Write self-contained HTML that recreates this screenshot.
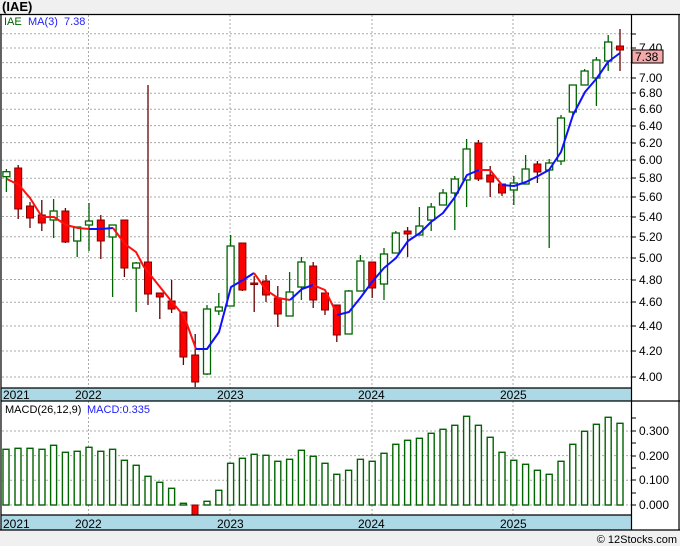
<!DOCTYPE html>
<html><head><meta charset="utf-8"><style>
html,body{margin:0;padding:0;background:#f0f0f0}
svg{display:block}
text{font-family:"Liberation Sans",sans-serif}
.g line{stroke:#006400;stroke-width:1.3}
.g rect{fill:#fff;stroke:#006400;stroke-width:1.3}
.r line{stroke:#6b0000;stroke-width:1.3}
.r rect{fill:#f00;stroke:#800000;stroke-width:1}
.grid line{stroke:#aaa;stroke-width:1;stroke-dasharray:2,2}
.m rect{fill:#fff;stroke:#006400;stroke-width:1.4}
.ax text{font-size:12px;fill:#000}
</style></head><body>
<svg width="680" height="546" viewBox="0 0 680 546">
<rect x="0" y="0" width="680" height="546" fill="#f0f0f0"/>
<text x="2" y="11" font-size="13" font-weight="bold" fill="#000">(IAE)</text>
<rect x="1" y="14" width="678" height="516" fill="#fff"/>
<!-- grids -->
<g class="grid">
<line x1="88.5" y1="15" x2="88.5" y2="388"/><line x1="230" y1="15" x2="230" y2="388"/><line x1="372" y1="15" x2="372" y2="388"/><line x1="513" y1="15" x2="513" y2="388"/>
<line x1="88.5" y1="401" x2="88.5" y2="515"/><line x1="230" y1="401" x2="230" y2="515"/><line x1="372" y1="401" x2="372" y2="515"/><line x1="513" y1="401" x2="513" y2="515"/>
<line x1="2" y1="377" x2="631" y2="377"/><line x1="2" y1="351" x2="631" y2="351"/><line x1="2" y1="326" x2="631" y2="326"/><line x1="2" y1="302.3" x2="631" y2="302.3"/><line x1="2" y1="279.5" x2="631" y2="279.5"/><line x1="2" y1="257.7" x2="631" y2="257.7"/><line x1="2" y1="236.7" x2="631" y2="236.7"/><line x1="2" y1="216.5" x2="631" y2="216.5"/><line x1="2" y1="197" x2="631" y2="197"/><line x1="2" y1="178.3" x2="631" y2="178.3"/><line x1="2" y1="160.2" x2="631" y2="160.2"/><line x1="2" y1="142.6" x2="631" y2="142.6"/><line x1="2" y1="125.6" x2="631" y2="125.6"/><line x1="2" y1="109.2" x2="631" y2="109.2"/><line x1="2" y1="93.2" x2="631" y2="93.2"/><line x1="2" y1="77.7" x2="631" y2="77.7"/><line x1="2" y1="62.6" x2="631" y2="62.6"/><line x1="2" y1="48" x2="631" y2="48"/><line x1="2" y1="33.7" x2="631" y2="33.7"/>
<line x1="2" y1="505" x2="631" y2="505"/><line x1="2" y1="480.3" x2="631" y2="480.3"/><line x1="2" y1="455.6" x2="631" y2="455.6"/><line x1="2" y1="431" x2="631" y2="431"/>
</g>
<!-- candles -->
<g class="g">
<line x1="6.4" y1="169" x2="6.4" y2="192"/><rect x="2.9" y="171.7" width="7" height="5"/>
<line x1="53.6" y1="199" x2="53.6" y2="238"/><rect x="50.1" y="211" width="7" height="9"/>
<line x1="77.2" y1="227" x2="77.2" y2="257"/><rect x="73.7" y="227" width="7" height="14"/>
<line x1="89" y1="203" x2="89" y2="251"/><rect x="85.5" y="221" width="7" height="4"/>
<line x1="112.6" y1="225" x2="112.6" y2="297"/><rect x="109.1" y="225" width="7" height="12"/>
<line x1="136.2" y1="262" x2="136.2" y2="312"/><rect x="132.7" y="263" width="7" height="5"/>
<line x1="207" y1="305" x2="207" y2="375"/><rect x="203.5" y="309" width="7" height="65"/>
<line x1="218.8" y1="293" x2="218.8" y2="315"/><rect x="215.3" y="307" width="7" height="4"/>
<line x1="230.6" y1="235" x2="230.6" y2="306"/><rect x="227.1" y="246" width="7" height="60"/>
<line x1="289.6" y1="272" x2="289.6" y2="316"/><rect x="286.1" y="292" width="7" height="24"/>
<line x1="301.4" y1="257" x2="301.4" y2="300"/><rect x="297.9" y="262" width="7" height="25"/>
<line x1="348.6" y1="290" x2="348.6" y2="334"/><rect x="345.1" y="291" width="7" height="43"/>
<line x1="360.4" y1="255" x2="360.4" y2="291"/><rect x="356.9" y="261" width="7" height="30"/>
<line x1="384" y1="248" x2="384" y2="300"/><rect x="380.5" y="254" width="7" height="30"/>
<line x1="395.8" y1="231" x2="395.8" y2="253"/><rect x="392.3" y="233" width="7" height="20"/>
<line x1="419.4" y1="207" x2="419.4" y2="235"/><rect x="415.9" y="226" width="7" height="9"/>
<line x1="431.2" y1="203" x2="431.2" y2="231"/><rect x="427.7" y="207" width="7" height="13"/>
<line x1="443" y1="189" x2="443" y2="205"/><rect x="439.5" y="193" width="7" height="12"/>
<line x1="454.8" y1="176" x2="454.8" y2="230"/><rect x="451.3" y="179" width="7" height="14"/>
<line x1="466.6" y1="139" x2="466.6" y2="207"/><rect x="463.1" y="149" width="7" height="31"/>
<line x1="513.8" y1="176" x2="513.8" y2="205"/><rect x="510.3" y="183" width="7" height="7"/>
<line x1="525.6" y1="155" x2="525.6" y2="184"/><rect x="522.1" y="169" width="7" height="15"/>
<line x1="549.2" y1="159" x2="549.2" y2="248"/><rect x="545.7" y="163" width="7" height="7"/>
<line x1="561" y1="115" x2="561" y2="165"/><rect x="557.5" y="118" width="7" height="43"/>
<line x1="572.8" y1="85" x2="572.8" y2="115"/><rect x="569.3" y="85" width="7" height="27"/>
<line x1="584.6" y1="69" x2="584.6" y2="85"/><rect x="581.1" y="71" width="7" height="14"/>
<line x1="596.4" y1="57" x2="596.4" y2="106"/><rect x="592.9" y="60" width="7" height="18"/>
<line x1="608.2" y1="35" x2="608.2" y2="71"/><rect x="604.7" y="42" width="7" height="19"/>
</g>
<g class="r">
<line x1="18.2" y1="165" x2="18.2" y2="219"/><rect x="14.7" y="168" width="7" height="41"/>
<line x1="30" y1="202" x2="30" y2="228"/><rect x="26.5" y="206" width="7" height="12"/>
<line x1="41.8" y1="200" x2="41.8" y2="231"/><rect x="38.3" y="215" width="7" height="8"/>
<line x1="65.4" y1="208" x2="65.4" y2="243"/><rect x="61.9" y="211" width="7" height="31"/>
<line x1="100.8" y1="215" x2="100.8" y2="259"/><rect x="97.3" y="220" width="7" height="21"/>
<line x1="124.4" y1="220" x2="124.4" y2="277"/><rect x="120.9" y="220" width="7" height="48"/>
<line x1="148" y1="85" x2="148" y2="305"/><rect x="144.5" y="262" width="7" height="32"/>
<line x1="159.8" y1="293" x2="159.8" y2="319"/><rect x="156.3" y="293" width="7" height="4"/>
<line x1="171.6" y1="280" x2="171.6" y2="313"/><rect x="168.1" y="301" width="7" height="8"/>
<line x1="183.4" y1="312" x2="183.4" y2="365"/><rect x="179.9" y="312" width="7" height="45"/>
<line x1="195.2" y1="334" x2="195.2" y2="387"/><rect x="191.7" y="355" width="7" height="27"/>
<line x1="242.4" y1="243" x2="242.4" y2="291"/><rect x="238.9" y="243" width="7" height="47"/>
<line x1="254.2" y1="276" x2="254.2" y2="312"/><rect x="250.7" y="283" width="7" height="1.5"/>
<line x1="266" y1="275" x2="266" y2="302"/><rect x="262.5" y="281" width="7" height="14"/>
<line x1="277.8" y1="286" x2="277.8" y2="327"/><rect x="274.3" y="298" width="7" height="16"/>
<line x1="313.2" y1="262" x2="313.2" y2="308"/><rect x="309.7" y="266" width="7" height="34"/>
<line x1="325" y1="293" x2="325" y2="315"/><rect x="321.5" y="293" width="7" height="17"/>
<line x1="336.8" y1="305" x2="336.8" y2="342"/><rect x="333.3" y="305" width="7" height="30"/>
<line x1="372.2" y1="262" x2="372.2" y2="298"/><rect x="368.7" y="262" width="7" height="26"/>
<line x1="407.6" y1="227" x2="407.6" y2="257"/><rect x="404.1" y="231" width="7" height="3"/>
<line x1="478.4" y1="140" x2="478.4" y2="181"/><rect x="474.9" y="143" width="7" height="36"/>
<line x1="490.2" y1="166" x2="490.2" y2="197"/><rect x="486.7" y="175" width="7" height="7"/>
<line x1="502" y1="184" x2="502" y2="196"/><rect x="498.5" y="184" width="7" height="9"/>
<line x1="537.4" y1="161" x2="537.4" y2="183"/><rect x="533.9" y="164" width="7" height="8"/>
<line x1="620" y1="29" x2="620" y2="71"/><rect x="616.5" y="46" width="7" height="4"/>
</g>
<!-- MA line -->
<g fill="none" stroke-width="2" stroke-linejoin="round">
<polyline stroke="#ff1010" points="7,179 19,185 30,198 42,217 54,217 66,225 78,228 89,229"/>
<polyline stroke="#1010ff" points="89,229 101,229 113,228"/>
<polyline stroke="#ff1010" points="113,228 125,244 136,252 144,267 160,287 172,302 184,316 196,349"/>
<polyline stroke="#1010ff" points="196,349 207,349 219,332 231,287 243,280 254,273"/>
<polyline stroke="#ff1010" points="254,273 266,290 278,298 290,300"/>
<polyline stroke="#1010ff" points="290,300 302,289 313,285"/>
<polyline stroke="#ff1010" points="313,285 325,290 337,314"/>
<polyline stroke="#1010ff" points="337,315 349,312 361,297 372,282 384,268 396,258 408,241 420,233 431,222 443,213 455,197 467,175 479,170"/>
<polyline stroke="#ff1010" points="479,170 490,170 502,185"/>
<polyline stroke="#1010ff" points="502,185 514,186 526,182 538,176 549,170 561,152 573,115 585,92 597,78 608,62 620,53"/>
</g>
<!-- MACD bars -->
<g class="m">
<rect x="3" y="449.3" width="6" height="55.7"/><rect x="15" y="448.3" width="6" height="56.7"/><rect x="27" y="448.3" width="6" height="56.7"/><rect x="39" y="449.3" width="6" height="55.7"/><rect x="50.6" y="445.3" width="6" height="59.7"/><rect x="62.4" y="452.3" width="6" height="52.7"/><rect x="74.2" y="451.3" width="6" height="53.7"/><rect x="86" y="447.3" width="6" height="57.7"/><rect x="97.8" y="451.3" width="6" height="53.7"/><rect x="109.6" y="449.3" width="6" height="55.7"/><rect x="121.4" y="460.3" width="6" height="44.7"/><rect x="133.2" y="465.3" width="6" height="39.7"/><rect x="145" y="476.3" width="6" height="28.7"/><rect x="156.8" y="482.3" width="6" height="22.7"/><rect x="168.6" y="488.3" width="6" height="16.7"/><rect x="180.4" y="503.3" width="6" height="1.7"/>
<rect x="204" y="501.3" width="6" height="3.7"/><rect x="215.8" y="490.3" width="6" height="14.7"/><rect x="227.6" y="463.3" width="6" height="41.7"/><rect x="239.4" y="458.3" width="6" height="46.7"/><rect x="251.2" y="454.3" width="6" height="50.7"/><rect x="263" y="455.3" width="6" height="49.7"/><rect x="274.8" y="461.3" width="6" height="43.7"/><rect x="286.6" y="459.3" width="6" height="45.7"/><rect x="298.4" y="450.3" width="6" height="54.7"/><rect x="310.2" y="456.3" width="6" height="48.7"/><rect x="322" y="463.3" width="6" height="41.7"/><rect x="333.8" y="474.3" width="6" height="30.7"/><rect x="345.6" y="470.3" width="6" height="34.7"/><rect x="357.4" y="459.3" width="6" height="45.7"/><rect x="369.2" y="461.3" width="6" height="43.7"/><rect x="381" y="453.3" width="6" height="51.7"/><rect x="392.8" y="444.3" width="6" height="60.7"/><rect x="404.6" y="440.3" width="6" height="64.7"/><rect x="416.4" y="438.3" width="6" height="66.7"/><rect x="428.2" y="433.3" width="6" height="71.7"/><rect x="440" y="429.3" width="6" height="75.7"/><rect x="451.8" y="425.3" width="6" height="79.7"/><rect x="463.6" y="416.3" width="6" height="88.7"/><rect x="475.4" y="425.3" width="6" height="79.7"/><rect x="487.2" y="437.3" width="6" height="67.7"/><rect x="499" y="452.3" width="6" height="52.7"/><rect x="510.8" y="460.3" width="6" height="44.7"/><rect x="522.6" y="464.3" width="6" height="40.7"/><rect x="534.4" y="470.3" width="6" height="34.7"/><rect x="546.2" y="474.3" width="6" height="30.7"/><rect x="558" y="461.3" width="6" height="43.7"/><rect x="569.8" y="444.3" width="6" height="60.7"/><rect x="581.6" y="431.3" width="6" height="73.7"/><rect x="593.4" y="424.3" width="6" height="80.7"/><rect x="605.2" y="417.3" width="6" height="87.7"/><rect x="617" y="423.3" width="6" height="81.7"/>
</g>
<rect x="192" y="505" width="6" height="10" fill="#f00" stroke="#800000" stroke-width="1"/>
<!-- date bands -->
<rect x="1" y="388" width="630" height="13" fill="#add8e6"/>
<rect x="1" y="515" width="630" height="15" fill="#add8e6"/>
<g stroke="#000" stroke-width="1.2">
<line x1="0" y1="14.5" x2="680" y2="14.5"/>
<line x1="1" y1="388" x2="631" y2="388"/>
<line x1="1" y1="401" x2="680" y2="401"/>
<line x1="1" y1="515" x2="631" y2="515"/>
<line x1="0" y1="530" x2="680" y2="530"/>
<line x1="1" y1="14" x2="1" y2="530"/>
<line x1="679" y1="14" x2="679" y2="530"/>
<line x1="631.5" y1="14" x2="631.5" y2="530"/>
</g>
<g class="ax">
<text x="3" y="399">2021</text><text x="75" y="399">2022</text><text x="217" y="399">2023</text><text x="358" y="399">2024</text><text x="500" y="399">2025</text>
<text x="3" y="528">2021</text><text x="75" y="528">2022</text><text x="217" y="528">2023</text><text x="358" y="528">2024</text><text x="500" y="528">2025</text>
<text x="639" y="381">4.00</text><text x="639" y="355">4.20</text><text x="639" y="330">4.40</text><text x="639" y="306">4.60</text><text x="639" y="284">4.80</text><text x="639" y="262">5.00</text><text x="639" y="241">5.20</text><text x="639" y="221">5.40</text><text x="639" y="201">5.60</text><text x="639" y="182">5.80</text><text x="639" y="164">6.00</text><text x="639" y="147">6.20</text><text x="639" y="130">6.40</text><text x="639" y="113">6.60</text><text x="639" y="97">6.80</text><text x="639" y="82">7.00</text><text x="639" y="52">7.40</text>
<text x="639" y="509">0.000</text><text x="639" y="484">0.100</text><text x="639" y="460">0.200</text><text x="639" y="435">0.300</text>
</g>
<g stroke="#000" stroke-width="1">
<line x1="631" y1="377" x2="636" y2="377"/><line x1="631" y1="351" x2="636" y2="351"/><line x1="631" y1="326" x2="636" y2="326"/><line x1="631" y1="302" x2="636" y2="302"/><line x1="631" y1="280" x2="636" y2="280"/><line x1="631" y1="258" x2="636" y2="258"/><line x1="631" y1="237" x2="636" y2="237"/><line x1="631" y1="217" x2="636" y2="217"/><line x1="631" y1="197" x2="636" y2="197"/><line x1="631" y1="178" x2="636" y2="178"/><line x1="631" y1="160" x2="636" y2="160"/><line x1="631" y1="143" x2="636" y2="143"/><line x1="631" y1="126" x2="636" y2="126"/><line x1="631" y1="109" x2="636" y2="109"/><line x1="631" y1="93" x2="636" y2="93"/><line x1="631" y1="78" x2="636" y2="78"/><line x1="631" y1="48" x2="636" y2="48"/><line x1="631" y1="34" x2="636" y2="34"/>
<line x1="631" y1="505" x2="636" y2="505"/><line x1="631" y1="480" x2="636" y2="480"/><line x1="631" y1="456" x2="636" y2="456"/><line x1="631" y1="431" x2="636" y2="431"/><line x1="631" y1="418" x2="636" y2="418"/><line x1="631" y1="443" x2="636" y2="443"/><line x1="631" y1="468" x2="636" y2="468"/><line x1="631" y1="493" x2="636" y2="493"/>
</g>
<rect x="632" y="50" width="31" height="13" fill="#f4aaaa" stroke="#000" stroke-width="1"/>
<text x="635" y="61" font-size="12" fill="#000">7.38</text>
<text x="4" y="25" font-size="11" fill="#006400">IAE</text>
<text x="28" y="25" font-size="11" fill="#2020ff">MA(3)</text>
<text x="64" y="25" font-size="11" fill="#2020ff">7.38</text>
<text x="5" y="413" font-size="11" fill="#000">MACD(26,12,9)</text>
<text x="87" y="413" font-size="11" fill="#2020ff">MACD:0.335</text>
<text x="677" y="543" font-size="11" fill="#000" text-anchor="end">© 12Stocks.com</text>
</svg>
</body></html>
